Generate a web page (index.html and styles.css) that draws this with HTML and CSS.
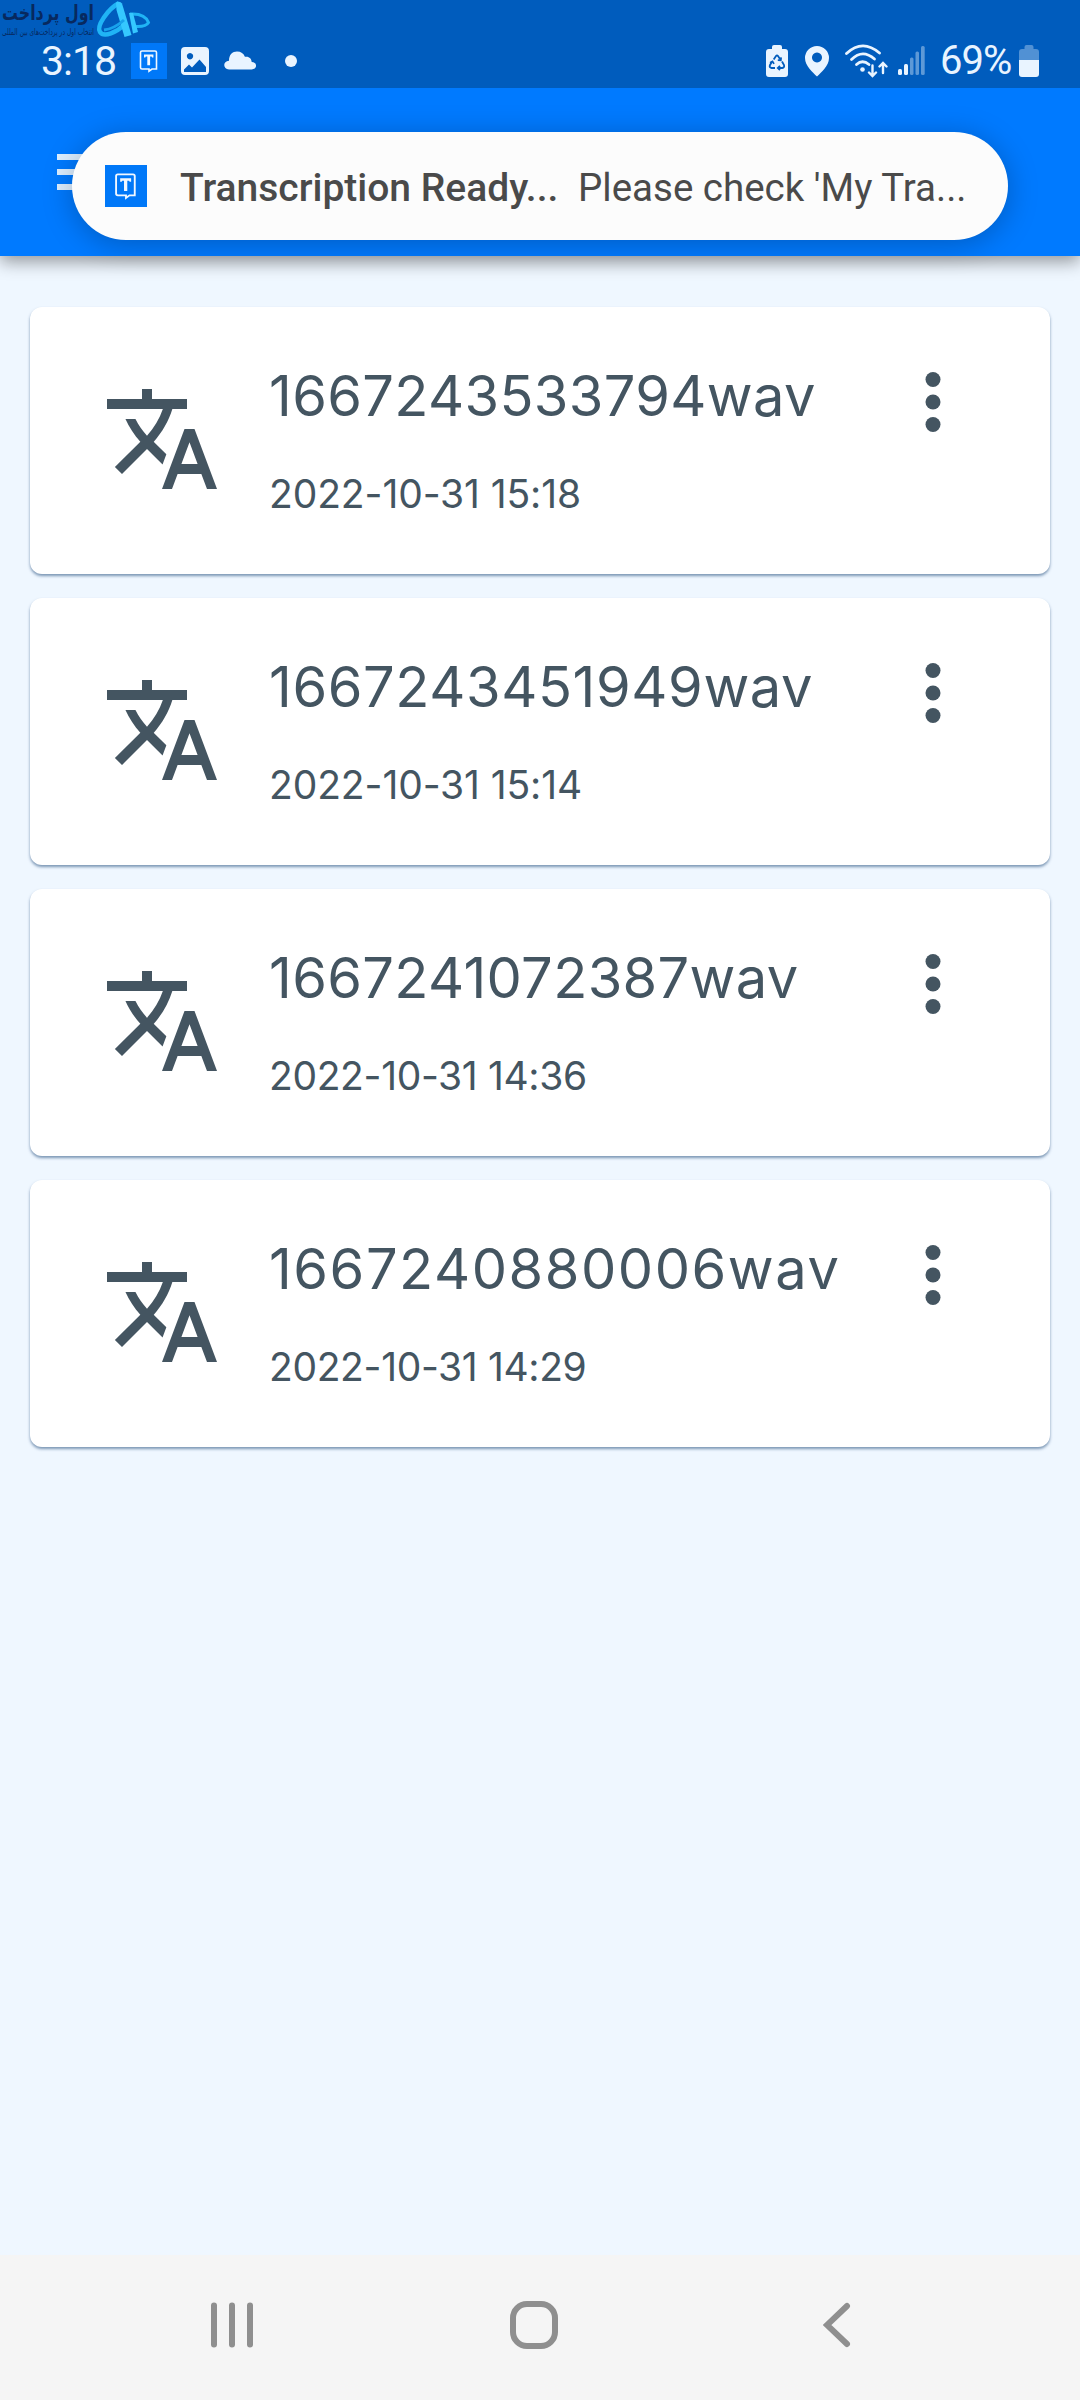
FILE: index.html
```html
<!DOCTYPE html>
<html lang="en">
<head>
<meta charset="utf-8">
<title>My Transcriptions</title>
<link rel="stylesheet" href="styles.css">
</head>
<body>
<svg class="defs" width="0" height="0">
  <symbol id="translate" viewBox="0 0 24 24"><path d="M12.87 15.07l-2.54-2.51.03-.03c1.74-1.94 2.98-4.17 3.71-6.53H17V4h-7V2H8v2H1v1.99h11.17C11.5 7.92 10.44 9.75 9 11.35 8.07 10.32 7.3 9.19 6.69 8h-2c.73 1.63 1.73 3.17 2.98 4.56l-5.09 5.02L4 19l5-5 3.11 3.11.76-2.04zM18.5 10h-2L12 22h2l1.12-3h4.75L21 22h2l-4.5-12zm-2.62 7l1.62-4.33L19.12 17h-3.24z"/></symbol>
  <symbol id="more" viewBox="0 0 24 24"><circle cx="12" cy="6" r="2"/><circle cx="12" cy="12" r="2"/><circle cx="12" cy="18" r="2"/></symbol>
  <symbol id="app" viewBox="0 0 36 36"><rect width="36" height="36" fill="#0078f8"/><path d="M9.500 9.500a1.500 1.500 0 0 1 1.500-1.500h13a1.500 1.500 0 0 1 1.500 1.500v16.500h-4.500l-3 2.200v-2.200h-7a1.500 1.500 0 0 1-1.500-1.500z" fill="none" stroke="#f1f8ff" stroke-width="1.600"/><path d="M13 11.400h9.400v3h-1.300l-.5-.9h-1.500v8.700h-2.800v-8.700h-1.500l-.5.9h-1.300z" fill="#f1f8ff"/></symbol>
</svg>

<div class="status">
  <span class="clock">3:18</span>
  <svg class="s-app" width="36" height="36"><use href="#app"/></svg>
  <svg class="s-image" width="28" height="28" viewBox="0 0 28 28"><path fill-rule="evenodd" d="M4 0h20a4 4 0 0 1 4 4v20a4 4 0 0 1-4 4H4a4 4 0 0 1-4-4V4a4 4 0 0 1 4-4zM9 6a3.200 3.200 0 1 0 .01 0zM3 22.500v2.500h22v-5l-6.500-7.500-7.500 8-3-3z"/></svg>
  <svg class="s-cloud" width="33" height="19" viewBox="0 0 33 19"><path d="M5 18.500C-1.500 18-1.200 10 5 9.800 5 3.500 8.500.5 13 .5c4 0 6.700 2 7.900 5.300C25 5 27.500 7.500 27.700 11c5.800.2 5.800 7.200 0 7.500z"/></svg>
  <i class="s-dot"></i>
  <span class="spacer"></span>
  <svg class="s-eco" width="22" height="32" viewBox="0 0 22 32"><path d="M6 2q0-2 2-2h6q2 0 2 2v2h3q3 0 3 3v22q0 3-3 3H3q-3 0-3-3V7q0-3 3-3h3z"/><g fill="none" stroke="#005cbd" stroke-width="1.800"><path d="M7.700 14.500l2.300-3.400q1-1.300 2 0l2.300 3.400M16 16.500l2 3.500q.8 2.500-1.800 3H12.500M9 23H5.500q-2.500-.5-1.600-2.800l2-3.500"/><path d="M11.800 15.200l3 .2.300-3M14 20.800l-2.200 2.200 2.200 2M4 17.800l2.500-1.400 1.500 2.500"/></g></svg>
  <svg class="s-pin" width="24" height="31" viewBox="0 0 24 31"><path fill-rule="evenodd" d="M12 0a12 12 0 0 1 12 12c0 8-8 14.500-12 18.500C8 26.500 0 20 0 12A12 12 0 0 1 12 0zm0 6.500a5 5 0 1 0 .01 0z"/></svg>
  <svg class="s-wifi" width="44" height="34" viewBox="0 0 44 34"><g fill="none" stroke="#e9f4ff" stroke-width="2.800" stroke-linecap="round"><path d="M2.500 9.500Q18.500-5.500 35.500 9"/><path d="M7.500 15.500Q18.500 4.500 30.500 15"/><path d="M12.500 20.500q6-5.500 12.500 0"/><path stroke-width="2.400" d="M28.500 21.500v10M25 28.500l3.500 3.500 3.500-3.500M39 29v-9M35.500 22.500L39 19l3.500 3.500"/></g><circle cx="18.500" cy="25.500" r="2.300"/></svg>
  <svg class="s-signal" width="28" height="30" viewBox="0 0 28 30"><rect y="23" width="4" height="6" rx="1.500"/><rect x="6" y="18" width="4" height="11" rx="1.500"/><g opacity=".4"><rect x="12" y="11.500" width="3.500" height="17.500" rx="1.500"/><rect x="17.500" y="5.500" width="3.500" height="23.500" rx="1.500"/><rect x="23" width="3.700" height="29" rx="1.500"/></g></svg>
  <span class="percent">69%</span>
  <svg class="s-batt" width="20" height="32" viewBox="0 0 20 32"><path opacity=".35" d="M5.500 2q0-2 2-2h5q2 0 2 2v2H17q3 0 3 3v8H0V7q0-3 3-3h2.500z"/><path d="M0 15h20v14q0 3-3 3H3q-3 0-3-3z"/></svg>

  <svg class="brand" width="152" height="40" viewBox="0 0 152 40">
    <text x="94" y="20" class="brand-name" textLength="92" lengthAdjust="spacingAndGlyphs">اول پرداخت</text>
    <text x="94" y="35" class="brand-line" textLength="92" lengthAdjust="spacingAndGlyphs">انتخاب اول در پرداخت‌های بین المللی</text>
    <path d="M119 3C108 9 96 26 100 32c4 6 17 0 24-7" fill="none" stroke="#20b4f5" stroke-width="4.500"/>
    <path d="M116 2.500q4-2 6 1l9.500 31.500-7 2-8-27z" fill="#35c8ff"/>
    <path d="M104 30q10-1 20-10" fill="none" stroke="#18a2ec" stroke-width="3"/>
    <path d="M130 14q15-1 18.500 8.500Q146 27 136 26.500" fill="none" stroke="#20b4f5" stroke-width="3"/>
    <path d="M129 13l4 0 5 19-5 1.500z" fill="#35c8ff"/>
  </svg>
</div>

<header class="appbar">
  <svg class="menu" width="54" height="36" viewBox="0 0 54 36"><path d="M0 0h54v6H0zM0 15h54v6H0zM0 30h54v6H0z"/></svg>
  <div class="toast">
    <svg class="toast-icon" width="42" height="42"><use href="#app"/></svg>
    <b class="toast-title">Transcription Ready...</b>
    <span class="toast-text">Please check 'My Tra...</span>
  </div>
</header>

<main class="list">
  <article class="card">
    <svg class="translate"><use href="#translate"/></svg>
    <div class="info"><h2 class="name">1667243533794wav</h2><p class="date">2022-10-31 15:18</p></div>
    <svg class="more"><use href="#more"/></svg>
  </article>
  <article class="card">
    <svg class="translate"><use href="#translate"/></svg>
    <div class="info"><h2 class="name name-mid">1667243451949wav</h2><p class="date">2022-10-31 15:14</p></div>
    <svg class="more"><use href="#more"/></svg>
  </article>
  <article class="card">
    <svg class="translate"><use href="#translate"/></svg>
    <div class="info"><h2 class="name">1667241072387wav</h2><p class="date date-tight">2022-10-31 14:36</p></div>
    <svg class="more"><use href="#more"/></svg>
  </article>
  <article class="card">
    <svg class="translate"><use href="#translate"/></svg>
    <div class="info"><h2 class="name name-wide">1667240880006wav</h2><p class="date date-tight">2022-10-31 14:29</p></div>
    <svg class="more"><use href="#more"/></svg>
  </article>
</main>

<nav class="navbar">
  <svg width="42" height="48" viewBox="0 0 42 48"><path d="M3 4.500v39M21 4.500v39M39 4.500v39"/></svg>
  <svg width="48" height="48" viewBox="0 0 48 48"><rect x="3" y="3" width="42" height="42" rx="14"/></svg>
  <svg width="28" height="48" viewBox="0 0 28 48"><path d="M24 5L4 24l20 19"/></svg>
</nav>
</body>
</html>
```
FILE: styles.css
```css
* { box-sizing: border-box; margin: 0; padding: 0; }
body {
  width: 1080px; height: 2400px; overflow: hidden;
  display: flex; flex-direction: column;
  background: #eff7ff; font-family: Roboto, sans-serif;
}
svg { display: block; flex: none; }
.defs { position: absolute; }

.status {
  position: relative; z-index: 3; flex: none; height: 88px;
  display: flex; align-items: flex-start;
  padding: 43px 41px 0 41px;
  background: #005cbd; color: #e9f4ff; fill: #e9f4ff;
}
.clock { width: 90px; margin-top: -6px; font-size: 41px; line-height: 48px; letter-spacing: -1px; }
.s-image { margin: 4px 0 0 14px; }
.s-cloud { margin: 8px 0 0 15px; }
.s-dot { width: 12px; height: 12px; margin: 12px 0 0 28px; border-radius: 50%; background: #e9f4ff; }
.spacer { flex: 1; }
.s-eco { margin-top: 2px; }
.s-pin { margin: 3px 0 0 17px; }
.s-wifi { margin: 1px 0 0 15px; }
.s-signal { margin: 3px 0 0 10px; }
.percent { width: 79px; margin: -6px 0 0 14px; font-size: 40px; line-height: 48px; letter-spacing: -1px; }
.s-batt { margin-top: 2px; }

.brand { position: absolute; left: 0; top: 0; direction: rtl; }
.brand-name { font: bold 21px "DejaVu Sans", sans-serif; fill: #07295f; }
.brand-line { font: 9px "DejaVu Sans", sans-serif; fill: #07295f; }

.appbar {
  position: relative; z-index: 2; flex: none; height: 168px;
  padding: 66px 57px 0; background: #007aff;
  box-shadow: 0 6px 16px rgba(0, 0, 0, .38);
}
.menu { fill: #dceeff; }
.toast {
  position: absolute; left: 72px; top: 44px; width: 936px; height: 108px;
  display: flex; align-items: center; padding-left: 33px;
  border-radius: 54px; background: #fcfcfc; color: #4a4a4a;
  box-shadow: 0 4px 30px rgba(0, 0, 0, .25);
  font-size: 39px; line-height: 48px; white-space: nowrap;
}
.toast-title { width: 398px; margin-left: 33px; padding-top: 3px; font-weight: 500; }
.toast-text { padding-top: 3px; font-size: 38.500px; }

.list { flex: 1; display: flex; flex-direction: column; gap: 24px; padding: 51px 30px 0; }
.card {
  height: 267px; display: flex; align-items: flex-start; padding-left: 72px;
  border-radius: 12px; background: #fff; color: #445561; fill: #445561;
  box-shadow: 0 2px 3px rgba(45, 85, 130, .6);
}
.translate { width: 120px; height: 120px; margin-top: 72px; }
.info { width: 619px; margin-left: 47px; padding-top: 55px; font-family: Inter, sans-serif; }
.name { font-size: 56px; line-height: 68px; font-weight: 400; letter-spacing: .35px; }
.name-mid { letter-spacing: .6px; }
.name-wide { letter-spacing: 1.550px; }
.date { margin-top: 40px; font-size: 39px; line-height: 48px; font-weight: 400; letter-spacing: -.1px; }
.date-tight { letter-spacing: -.35px; }
.more { width: 90px; height: 90px; margin-top: 50px; }

.navbar {
  flex: none; height: 145px; display: grid; align-items: start;
  grid-template-columns: 299px 313px 28px; padding: 46px 0 0 211px;
  background: #f5f5f5; fill: none; stroke: #8f8f8f; stroke-width: 6; stroke-linecap: round;
}
```
